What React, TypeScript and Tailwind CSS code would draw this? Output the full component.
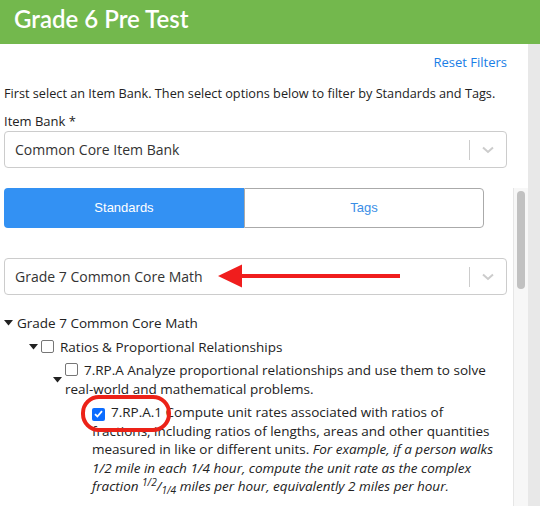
import React from 'react';

/**
 * Pre-test filter panel: item bank picker, standards/tags tabs and the
 * standards tree, with the two annotation marks drawn over it.
 */

const FONT = { fontFamily: '"Open Sans", "Noto Sans", sans-serif' };

function Chevron() {
  return (
    <svg width="12" height="8" viewBox="0 0 12 8" fill="none">
      <path d="M1 1.5l5 4.5 5-4.5" stroke="#cccccc" strokeWidth="2" />
    </svg>
  );
}

function SelectBox({ value, className = '' }: { value: string; className?: string }) {
  return (
    <div className={`h-[37px] border border-[#cccccc] rounded-[4px] flex items-center bg-white ${className}`}>
      <span className="flex-1 pl-[10px] text-[14px] text-[#333333]">{value}</span>
      <span className="w-px h-[20px] bg-[#cccccc]" />
      <span className="w-[36px] flex justify-center">
        <Chevron />
      </span>
    </div>
  );
}

function Caret() {
  return (
    <svg width="9" height="6" viewBox="0 0 9 6" className="shrink-0">
      <path d="M0 0h9L4.5 5.5z" fill="#222222" />
    </svg>
  );
}

function Box({ checked = false }: { checked?: boolean }) {
  if (checked) {
    return (
      <span className="inline-flex w-[13px] h-[13px] rounded-[2px] bg-[#0b6cff] items-center justify-center align-[-1px] mr-[6px]">
        <svg width="9" height="8" viewBox="0 0 9 8" fill="none">
          <path d="M1 4.2l2.4 2.3L8 1.2" stroke="white" strokeWidth="1.8" />
        </svg>
      </span>
    );
  }
  return (
    <span className="inline-block w-[13px] h-[13px] rounded-[2px] border border-[#767676] bg-white align-[-1px] mr-[6px]" />
  );
}

export default function App() {
  return (
    <div className="w-[540px] h-[506px] overflow-hidden flex flex-col bg-white text-[#222222]" style={FONT}>
      <div className="h-[44px] shrink-0 bg-[#73b84d] flex items-center pl-[14px] pb-[7px]">
        <h1
          className="text-white text-[24px] leading-none font-semibold"
          style={{ fontFamily: 'Lato, "Open Sans", sans-serif' }}
        >
          Grade 6 Pre Test
        </h1>
      </div>

      <div className="flex flex-1 min-h-0">
        <div className="flex-1 flex flex-col pl-[4px] min-w-0">
          <div className="mr-[21px] pt-[9px] text-right text-[13px] leading-[18px]">
            <a className="text-[#1a7ee6]">Reset Filters</a>
          </div>
          <p className="mt-[14px] text-[12.7px] leading-[16px]">
            First select an Item Bank. Then select options below to filter by Standards and Tags.
          </p>
          <label className="mt-[12px] text-[13px] leading-[16px]">Item Bank *</label>
          <SelectBox value="Common Core Item Bank" className="mt-[2px] mr-[21px]" />

          <div className="mt-[20px] flex flex-1 min-h-0">
            <div className="flex-1 min-w-0 relative">
              <div className="w-[480px] h-[40px] flex text-[13px]" style={{ fontFamily: '"Liberation Sans", Arial, sans-serif' }}>
                <div className="w-[240px] bg-[#3391f3] text-white rounded-l-[4px] flex items-center justify-center">
                  Standards
                </div>
                <div className="flex-1 border border-[#aaaaaa] rounded-r-[4px] text-[#3a8ee6] flex items-center justify-center">
                  Tags
                </div>
              </div>

              <div className="relative mt-[30px] mr-[6px]">
                <SelectBox value="Grade 7 Common Core Math" />
                <svg className="absolute left-[209px] top-[5px]" width="190" height="26" viewBox="0 0 190 26">
                  <path d="M5 13L29 1.5v9.5h158v4H29v9.5z" fill="#f01d1d" />
                </svg>
              </div>

              <div className="mt-[19px] text-[13.5px] leading-[18.5px] text-[#222222]">
                <div className="flex items-center gap-[4px]">
                  <Caret />
                  <span>Grade 7 Common Core Math</span>
                </div>
                <div className="mt-[5px] ml-[25px] flex items-center gap-[3px]">
                  <Caret />
                  <span>
                    <Box />
                    Ratios &amp; Proportional Relationships
                  </span>
                </div>
                <div className="mt-[5px] ml-[49px] flex items-center gap-[3px] w-[440px]">
                  <Caret />
                  <span>
                    <Box />
                    7.RP.A Analyze proportional relationships and use them to solve real-world and mathematical
                    problems.
                  </span>
                </div>
                <div className="mt-[5px] ml-[88px] whitespace-nowrap">
                  <Box checked />
                  7.RP.A.1 Compute unit rates associated with ratios of
                  <br />
                  fractions, including ratios of lengths, areas and other quantities
                  <br />
                  measured in like or different units. <em>For example, if a person walks</em>
                  <br />
                  <em>1/2 mile in each 1/4 hour, compute the unit rate as the complex</em>
                  <br />
                  <em>
                    fraction <sup>1/2</sup>/<sub>1/4</sub> miles per hour, equivalently 2 miles per hour.
                  </em>
                </div>
              </div>

              <svg className="absolute left-[77px] top-[207px]" width="92" height="38" viewBox="0 0 92 38">
                <rect x="2" y="2" width="86" height="33" rx="16" fill="none" stroke="#ec2218" strokeWidth="4" />
              </svg>
            </div>

            <div className="w-[15px] shrink-0 bg-[#f7f7f7] border-l border-[#e6e6e6] pt-[3px] flex justify-center">
              <div className="w-[8px] h-[98px] rounded-full bg-[#c1c1c1]" />
            </div>
          </div>
        </div>
        <div className="w-[12px] shrink-0 bg-[#e8e8e8]" />
      </div>
    </div>
  );
}
